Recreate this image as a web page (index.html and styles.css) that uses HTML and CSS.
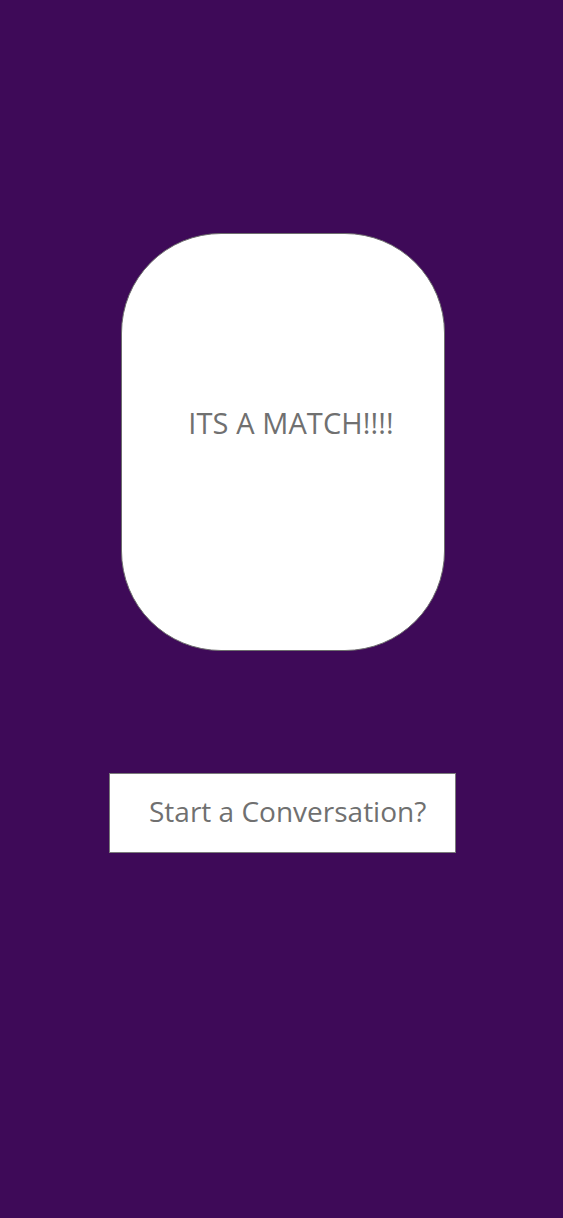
FILE: index.html
```html
<!DOCTYPE html>
<html lang="en">
<head>
<meta charset="utf-8">
<title>Match</title>
<link rel="stylesheet" href="styles.css">
</head>
<body>
<main class="screen">
  <section class="card">
    <p class="card-text">ITS A MATCH!!!!</p>
  </section>
  <button class="cta" type="button">Start a Conversation?</button>
</main>
</body>
</html>
```
FILE: styles.css
```css
html, body {
  margin: 0;
  padding: 0;
  background: #3e0a58;
}
.screen {
  min-height: 1218px;
  display: flex;
  flex-direction: column;
  align-items: flex-start;
  padding-top: 233px;
  box-sizing: border-box;
  font-family: "Open Sans", "Noto Sans", sans-serif;
}
.card {
  margin-left: 121px;
  width: 324px;
  height: 418px;
  box-sizing: border-box;
  background: #fff;
  border: 1px solid #6e6e6e;
  border-radius: 100px;
  display: flex;
  justify-content: center;
  padding-top: 170px;
  padding-left: 16px;
}
.card-text {
  margin: 0;
  font-size: 29px;
  line-height: 38px;
  color: #707070;
  letter-spacing: 0.1px;
}
.cta {
  margin-top: 122px;
  margin-left: 109px;
  width: 347px;
  height: 80px;
  box-sizing: border-box;
  background: #fff;
  border: 1px solid #7a7a7a;
  border-radius: 0;
  font-family: "Open Sans", "Noto Sans", sans-serif;
  font-size: 28px;
  color: #707070;
  text-align: left;
  padding: 0 0 4px 39px;
  letter-spacing: 0;
}
```
